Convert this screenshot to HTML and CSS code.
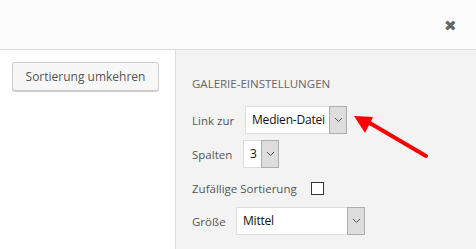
FILE: index.html
```html
<!DOCTYPE html>
<html>
<head>
    <title>Galerie</title>
    <link rel="stylesheet" href="styles.css">
</head>
<body>
    <div class="header">
        <span class="close">&#x2716;</span>
    </div>
    <div class="main">
        <div class="sidebar">
            <button class="button">Sortierung umkehren</button>
        </div>
        <div class="settings">
            <h2>Galerie-Einstellungen</h2>
            <div class="row">
                <label class="link-label">Link zur</label>
                <div class="select link-select">
                    <span class="value">Medien-Datei</span>
                    <span class="arrow"><svg width="9" height="6" viewBox="0 0 9 6"><path d="M1 1 L4.5 4.5 L8 1" fill="none" stroke="#555" stroke-width="1"/></svg></span>
                </div>
            </div>
            <div class="row">
                <label class="cols-label">Spalten</label>
                <div class="select cols-select">
                    <span class="value">3</span>
                    <span class="arrow"><svg width="9" height="6" viewBox="0 0 9 6"><path d="M1 1 L4.5 4.5 L8 1" fill="none" stroke="#555" stroke-width="1"/></svg></span>
                </div>
            </div>
            <div class="row check-row">
                <label class="check-label">Zufällige Sortierung</label>
                <span class="checkbox"></span>
            </div>
            <div class="row">
                <label class="size-label">Größe</label>
                <div class="select size-select">
                    <span class="value">Mittel</span>
                    <span class="arrow"><svg width="9" height="6" viewBox="0 0 9 6"><path d="M1 1 L4.5 4.5 L8 1" fill="none" stroke="#555" stroke-width="1"/></svg></span>
                </div>
            </div>
        </div>
    </div>
    <svg class="pointer" width="90" height="50" viewBox="0 0 90 50">
        <line x1="74" y1="40" x2="16" y2="6" stroke="#f00" stroke-width="4" stroke-linecap="round"/>
        <polygon points="2,0 21,1 13,17" fill="#f00"/>
    </svg>
</body>
</html>
```

FILE: styles.css
```css
body {
    margin: 0;
    padding: 0;
    font-family: "Open Sans", sans-serif;
    background: #f3f3f3;
    width: 476px;
    height: 249px;
    overflow: hidden;
    position: relative;
}
.header {
    height: 49px;
    background: #fcfcfc;
    border-bottom: 1px solid #dcdcdc;
    display: flex;
    align-items: center;
    justify-content: flex-end;
    padding-right: 19px;
}
.close {
    color: #666;
    font-size: 15px;
    line-height: 1;
    margin-top: 1px;
}
.main {
    display: flex;
    height: 199px;
}
.sidebar {
    width: 176px;
    background: #fff;
    border-right: 1px solid #dcdcdc;
    padding: 12px 0 0 12px;
    box-sizing: border-box;
}
.button {
    font-family: "Open Sans", sans-serif;
    font-size: 12px;
    color: #555;
    background: #f7f7f7;
    border: 1px solid #cccccc;
    border-radius: 3px;
    box-shadow: 0 1px 0 #cccccc;
    height: 29px;
    width: 147px;
    padding: 0;
}
.settings {
    flex: 1;
    padding: 27px 0 0 16px;
}
h2 {
    margin: 0 0 15px;
    font-size: 11.5px;
    font-weight: normal;
    color: #666;
    text-transform: uppercase;
    line-height: 14px;
}
.row {
    display: flex;
    align-items: center;
    height: 28px;
    margin-bottom: 6px;
}
.row label {
    font-size: 11.5px;
    color: #555;
    white-space: nowrap;
}
.link-label {
    width: 53px;
}
.cols-label {
    width: 51px;
}
.size-label {
    width: 44px;
}
.select {
    display: flex;
    height: 28px;
    box-sizing: border-box;
    border: 1px solid #dddddd;
    background: #fff;
}
.select .value {
    flex: 1;
    font-size: 12px;
    letter-spacing: -0.2px;
    color: #111;
    line-height: 26px;
    padding-left: 6px;
    white-space: nowrap;
}
.select .arrow {
    width: 16px;
    background: #dddddd;
    border: 1px solid #adadad;
    margin: -1px -1px -1px 0;
    display: flex;
    align-items: center;
    justify-content: center;
}
.link-select {
    width: 102px;
}
.cols-select {
    width: 36px;
}
.size-select {
    width: 129px;
}
.check-row {
    margin-bottom: 5px;
}
.check-label {
    width: 119px;
}
.checkbox {
    width: 13px;
    height: 13px;
    border: 1px solid #333;
    box-sizing: border-box;
    background: #fff;
}
.pointer {
    position: absolute;
    left: 352px;
    top: 116px;
}
```
